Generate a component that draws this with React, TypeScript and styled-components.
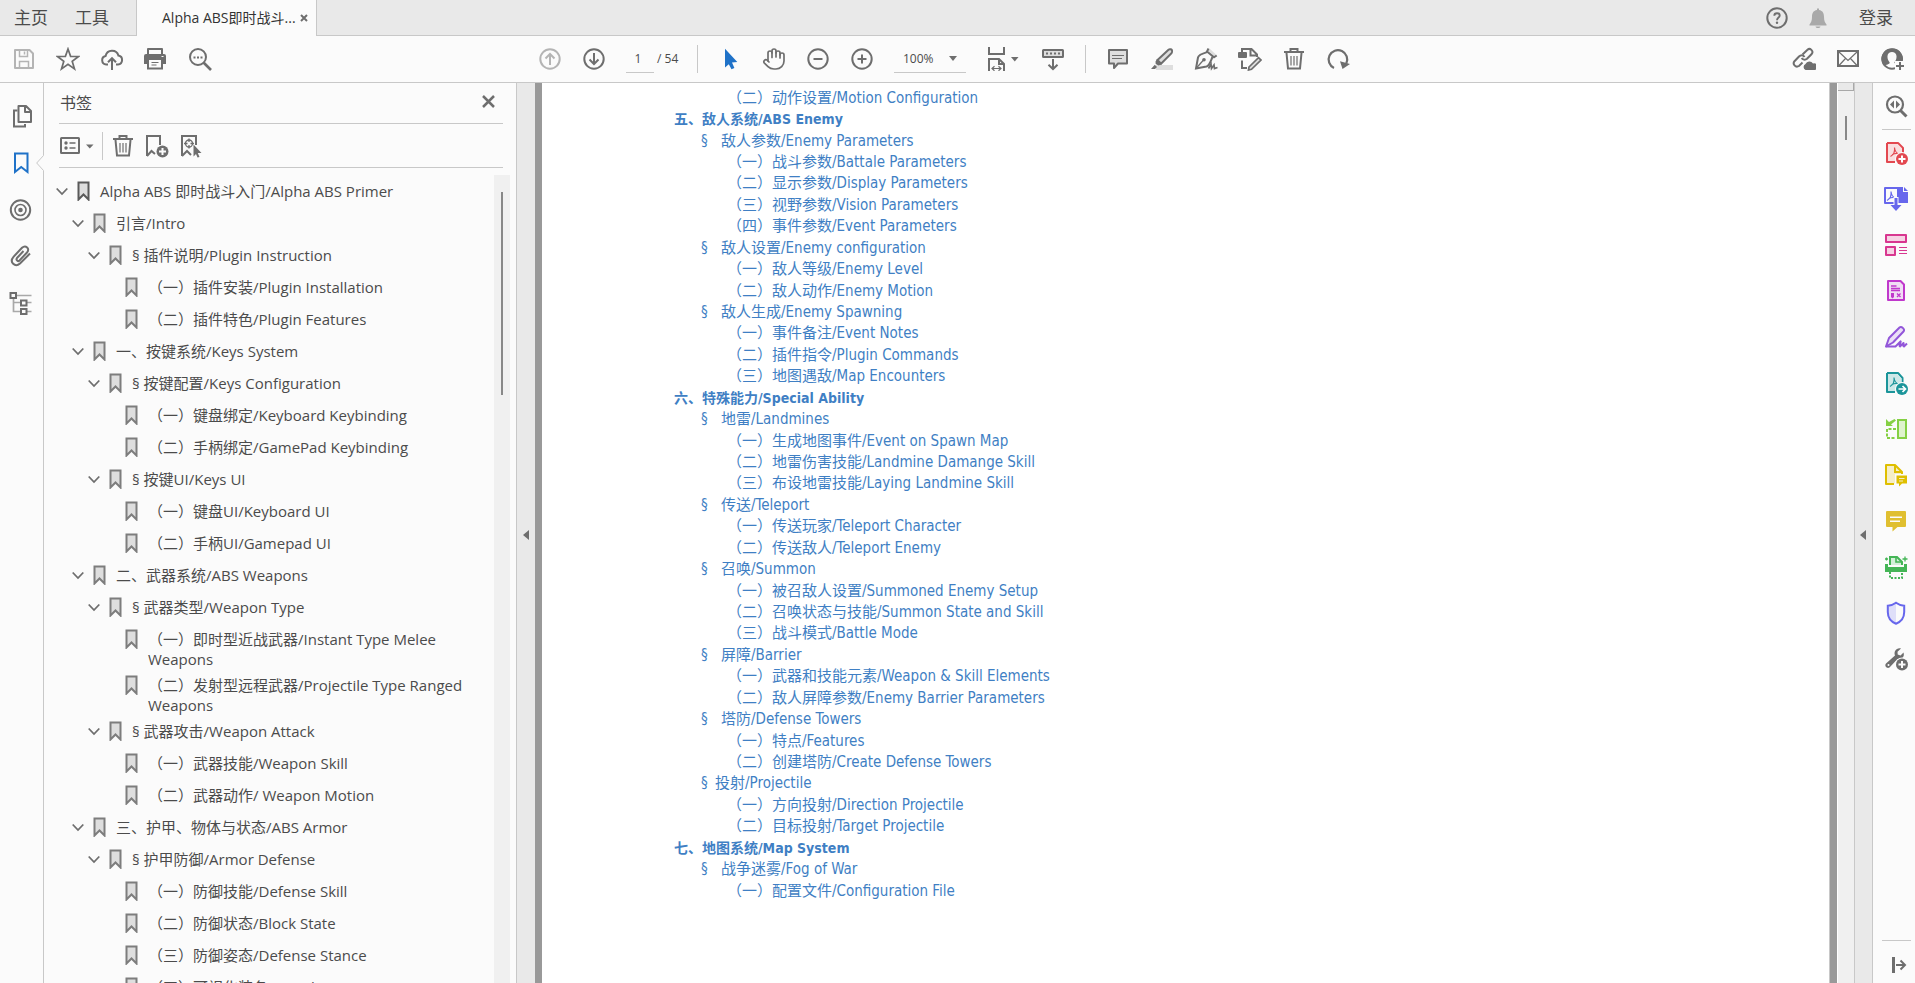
import React from 'react';
import styled, { createGlobalStyle } from 'styled-components';
import { Hand } from 'lucide-react';

const UI_FONT = '"Open Sans", "Noto Sans CJK SC", sans-serif';
const DOC_FONT = '"DejaVu Sans Condensed", "Noto Sans CJK SC", sans-serif';
const ICON = '#6e6e6e';
const LINE = '#c8c8c8';
const PALE = '#dedede';

const GlobalStyle = createGlobalStyle`
  *, *::before, *::after { box-sizing: border-box; }
  body { margin: 0; font-family: ${UI_FONT}; font-size: 15px; color: #4b4b4b; }
  button { border: 0; padding: 0; background: none; color: inherit; font: inherit; cursor: pointer; }
  ul { margin: 0; padding: 0; list-style: none; }
  svg { display: block; }
`;

const App_ = styled.div`
  display: flex;
  flex-direction: column;
  height: 100vh;
  overflow: hidden;
  background: #fbfbfb;
`;

/* ---------- top tab strip ---------- */
const TabStrip = styled.header`
  display: flex;
  height: 36px;
  flex: none;
  background: #e9e9e9;
`;
const StripLinks = styled.nav`
  display: flex;
  gap: 27px;
  width: 136px;
  padding-left: 14px;
  border-bottom: 1px solid ${LINE};
`;
const StripButton = styled.button`
  font-size: 17px;
  line-height: 34px;
  white-space: nowrap;
`;
const FileTab = styled.div`
  display: flex;
  align-items: center;
  gap: 5px;
  width: 181px;
  padding-left: 25px;
  border: solid ${LINE};
  border-width: 0 1px;
  background: #fbfbfb;
`;
const FileName = styled.button`
  width: 133px;
  font-size: 14px;
  line-height: 36px;
  color: #333;
  white-space: nowrap;
`;
const StripEnd = styled.div`
  display: flex;
  flex: 1;
  justify-content: flex-end;
  align-items: center;
  padding-right: 22px;
  border-bottom: 1px solid ${LINE};
`;
const StripIcons = styled.div`
  display: flex;
  gap: 17px;
  margin-right: 29px;
`;

/* ---------- toolbar ---------- */
const Toolbar = styled.div`
  display: grid;
  grid-template-columns: 1fr auto 1fr;
  align-items: center;
  height: 47px;
  flex: none;
  border-bottom: 1px solid ${LINE};
`;
const ToolGroup = styled.div<{ $end?: boolean; $middle?: boolean }>`
  display: flex;
  align-items: center;
  gap: 20px;
  justify-content: ${(p) => (p.$end ? 'flex-end' : 'flex-start')};
  padding: 0 ${(p) => (p.$middle ? 27 : p.$end ? 11 : 0)}px 0 ${(p) => (p.$middle || p.$end ? 0 : 12)}px;
`;
const IconButton = styled.button<{ $color?: string }>`
  display: flex;
  flex: none;
  color: ${(p) => p.$color ?? ICON};
`;
const Divider = styled.span`
  width: 1px;
  height: 28px;
  background: ${LINE};
`;
const PageField = styled.label`
  display: flex;
  gap: 3px;
  width: 51px;
  height: 28px;
  font-size: 12px;
  line-height: 28px;
  white-space: nowrap;
`;
const PageInput = styled.input`
  width: 28px;
  padding: 0 4px 0 0;
  border: 0;
  border-bottom: 1px solid ${LINE};
  background: none;
  color: inherit;
  font: inherit;
  text-align: center;
`;
const ZoomField = styled.label`
  display: flex;
  align-items: center;
  width: 72px;
  height: 28px;
  padding-right: 9px;
  border-bottom: 1px solid ${LINE};
  color: ${ICON};
`;
const ZoomSelect = styled.select`
  flex: 1;
  appearance: none;
  border: 0;
  padding: 0 0 0 9px;
  background: none;
  color: #4b4b4b;
  font: 12px/26px ${UI_FONT};
`;

/* ---------- body ---------- */
const Body = styled.div`
  display: flex;
  flex: 1;
  min-height: 0;
`;
const LeftRail = styled.nav`
  display: flex;
  flex-direction: column;
  align-items: flex-start;
  gap: 23px;
  width: 44px;
  flex: none;
  padding: 21px 0 0 8px;
  border-right: 1px solid ${LINE};
`;
const RailSlot = styled.div`
  position: relative;
`;
const Notch = styled.svg`
  position: absolute;
  left: 28px;
  top: 4px;
`;
const Panel = styled.aside`
  display: flex;
  flex-direction: column;
  width: 473px;
  flex: none;
  border-right: 1px solid ${LINE};
`;
const PanelHead = styled.div`
  display: flex;
  align-items: center;
  justify-content: space-between;
  height: 41px;
  flex: none;
  margin: 0 13px 0 15px;
  padding: 0 8px 3px 0;
  border-bottom: 1px solid ${LINE};
`;
const PanelTitle = styled.h2`
  margin: 0;
  padding-left: 1px;
  font-size: 16px;
  font-weight: 400;
`;
const PanelTools = styled.div`
  display: flex;
  align-items: center;
  gap: 8px;
  height: 44px;
  flex: none;
  margin: 0 13px 0 15px;
  border-bottom: 1px solid ${LINE};
`;
const PanelGroup = styled.div`
  display: flex;
  gap: 10px;
`;
const TreeArea = styled.div`
  display: flex;
  flex: 1;
  min-height: 0;
  padding-top: 7px;
`;
const Tree = styled.ul`
  flex: 1;
  overflow: hidden;
`;
const TreeRow = styled.li<{ $depth: number }>`
  display: flex;
  min-height: 32px;
  padding: 6px 16px 0 ${(p) => (p.$depth - 1) * 16 + 12}px;
`;
const Toggle = styled.button`
  width: 21px;
  height: 20px;
  flex: none;
  color: ${ICON};
`;
const MarkSlot = styled.span<{ $strong: boolean }>`
  width: 23px;
  flex: none;
  color: ${(p) => (p.$strong ? '#5a5a5a' : '#7d7d7d')};
`;
const TreeLink = styled.a`
  flex: 1;
  color: inherit;
  line-height: 20px;
  text-decoration: none;
`;
const TreeScroll = styled.div`
  width: 16px;
  margin-right: 6px;
  padding: 17px 0 0 7px;
  background: #f0f0f0;
`;
const Thumb = styled.div<{ $size: number }>`
  width: 2px;
  height: ${(p) => p.$size}px;
  background: #888;
`;
const Collapse = styled.button<{ $right?: boolean }>`
  display: flex;
  align-items: center;
  justify-content: center;
  width: 18px;
  flex: none;
  padding: 4px 1px 0 0;
  background: #e9e9e9;
  color: ${ICON};
  ${(p) => p.$right && `border: solid ${LINE}; border-width: 0 1px; width: 19px;`}
`;
const Desk = styled.main`
  flex: 1;
  min-width: 0;
  padding: 0 7px;
  background: #999;
`;
const Sheet = styled.article`
  height: 100%;
  overflow: hidden;
  padding: 4px 0 0 132px;
  border-right: 1px solid ${LINE};
  background: #fff;
`;
const Toc = styled.ul`
  display: grid;
  grid-auto-rows: 22px 21px 22px 21px 21px 22px 21px;
  align-items: center;
`;
const TocItem = styled.li<{ $level: number }>`
  padding-left: ${(p) => [0, 27, 53][p.$level - 1]}px;
  font-family: ${DOC_FONT};
  font-size: ${(p) => (p.$level === 1 ? 14 : 15)}px;
  line-height: 21px;
  font-weight: ${(p) => (p.$level === 1 ? 700 : 400)};
  white-space: nowrap;
`;
const TocLink = styled.a`
  color: #3f7fc4;
  text-decoration: none;
`;
const Section = styled.span<{ $tight: boolean }>`
  display: inline-block;
  width: ${(p) => (p.$tight ? 14 : 20)}px;
`;
const DocScroll = styled.div`
  display: flex;
  flex-direction: column;
  width: 17px;
  flex: none;
  border-left: 1px solid #fff;
  background: #f0f0f0;
`;
const ScrollCap = styled.div`
  height: 8px;
  margin-bottom: 25px;
  border: solid #a8a8a8;
  border-width: 0 1px 1px 0;
  background: #e9e9e9;
`;
const DocThumb = styled(Thumb)`
  margin-left: 7px;
`;
const RightRail = styled.nav`
  display: flex;
  flex-direction: column;
  width: 42px;
  flex: none;
  padding: 11px 4px 6px 9px;
`;
const RailGroup = styled.div`
  display: flex;
  flex: 1;
  flex-direction: column;
  gap: 22px;
  padding: 11px 0 0 2px;
`;
const RailRule = styled.span`
  height: 1px;
  flex: none;
  background: ${LINE};
`;
const RailTop = styled.div`
  padding: 0 0 11px 2px;
`;
const RailBottom = styled.div`
  padding: 12px 0 0 5px;
`;

/* ---------- icons ---------- */
type IconProps = { children: React.ReactNode; w?: number; h?: number; sw?: number };
const Icon = ({ children, w = 24, h = 24, sw = 2 }: IconProps) => (
  <svg width={w} height={h} viewBox={`0 0 ${w} ${h}`} fill="none" stroke="currentColor" strokeWidth={sw} aria-hidden="true">
    {children}
  </svg>
);
const solid = { fill: 'currentColor', stroke: 'none' };

const SaveIcon = () => (
  <Icon>
    <path d="M3 3H17.500L21 6.500V21H3Z" strokeLinejoin="round" />
    <path d="M7.500 3V9.500H15.500V3M7.500 21V14.500H16.500V21" strokeWidth="1.500" />
    <path d="M12.500 4.500V7.500" strokeWidth="1.500" />
  </Icon>
);
const StarIcon = () => (
  <Icon sw={1.7}>
    <path d="M12 2 14.600 9.300 22.500 9.500 16.200 14.300 18.500 21.900 12 17.400 5.500 21.900 7.800 14.300 1.500 9.500 9.400 9.300Z" />
  </Icon>
);
const CloudUpIcon = () => (
  <Icon>
    <path d="M8 17.500H6.200A4.300 4.300 0 0 1 5.600 9A6.600 6.600 0 0 1 18.400 8.600A4.500 4.500 0 0 1 18 17.500H16" />
    <path d="M12 23V11.500M8 15.300 12 11.200 16 15.300" />
  </Icon>
);
const PrintIcon = () => (
  <Icon>
    <path d="M4 7V2H18V7" strokeLinejoin="round" />
    <path d="M2 7H20A2 2 0 0 1 22 9V17H0V9A2 2 0 0 1 2 7Z" {...solid} />
    <rect x="4" y="12" width="14" height="9.500" fill="#fbfbfb" />
    <path d="M7.500 15.500H14.500M7.500 18H12.500" strokeWidth="1" />
    <rect x="17.500" y="9" width="2" height="1" fill="#fbfbfb" stroke="none" />
  </Icon>
);
const FindIcon = () => (
  <Icon>
    <circle cx="10" cy="10" r="8" />
    <path d="M15.500 15.500 23 23" strokeWidth="2.600" />
    <path d="M5.500 9.500h2v2h-2zM9 9.500h2v2h-2zM12.500 9.500h2v2h-2z" {...solid} />
  </Icon>
);
const Ring = ({ d }: { d: string }) => (
  <Icon>
    <circle cx="12" cy="12" r="9.700" />
    <path d={d} />
  </Icon>
);
const CursorIcon = () => (
  <Icon>
    <path d="M7 1.800V20.500L10.800 17.200 13.500 22.300 16.400 21 14 15.500 19.300 15Z" {...solid} />
  </Icon>
);
const FitIcon = () => (
  <Icon w={35}>
    <path d="M3 0V7H18V0M3 24V12H13L18 17V24M13 12V17H18" />
    <path d="M6.500 21.500H14.500M8.500 19.200 6 21.500 8.500 23.800M12.500 19.200 15 21.500 12.500 23.800" strokeWidth="1.200" />
    <path d="M25 10H32.500L28.800 14.500Z" {...solid} />
  </Icon>
);
const RulerDownIcon = () => (
  <Icon>
    <rect x="2" y="3" width="20" height="7" rx="0.500" fill={PALE} />
    <path d="M5 6.500H19" strokeDasharray="2 2" />
    <path d="M12 12V22M7.500 17.700 12 22 16.500 17.700" />
  </Icon>
);
const CommentIcon = () => (
  <Icon>
    <path d="M3 3H21V16.500H12L8 21V16.500H3Z" fill={PALE} strokeLinejoin="round" />
    <path d="M6 8.500H18M6 11.500H16" strokeWidth="1" />
  </Icon>
);
const HighlightIcon = () => (
  <Icon>
    <rect x="6" y="18" width="17" height="5" fill={PALE} stroke="none" />
    <path d="M7.500 13 18.500 2.700C19.500 1.800 22.500 1.800 22 5L21.500 6.300 11 16.700Z" fill={PALE} strokeWidth="2" />
    <path d="M7 12.200 5.500 14.500 5.700 17 8.500 18.500 10.800 17.700 12 16.500ZM4.800 17.800 1 22H5L7 20Z" {...solid} />
  </Icon>
);
const PenIcon = () => (
  <Icon>
    <path d="M13.500 3 15.500 1.500 22.500 8 20.500 9.500Z" fill={PALE} stroke="none" />
    <path d="M14.500 1.500 13 4.500 20 10.300 22.700 8.500" strokeWidth="2" />
    <path d="M13.500 5C9 6.300 4.500 7.500 4 10.500L2 21.500 12.500 19.500C15.500 18.500 16.500 14.500 18.500 10" strokeWidth="2" />
    <path d="M2 21.500 9.500 13" strokeWidth="1.200" />
    <circle cx="10" cy="12.700" r="1.800" {...solid} />
    <path d="M14.500 21.500 17 17 17.500 21.500 20 18 20.500 21.500 23.500 20.500" strokeWidth="1.700" />
  </Icon>
);
const EditIcon = () => (
  <Icon>
    <rect x="0" y="5" width="9" height="6" rx="1" {...solid} />
    <path d="M4 5V2H13.500L19 7.500V10M12.500 2V8.500H19M4 13.500V21H9" strokeWidth="2" />
    <path d="M11 20 20.500 10.700 23 13 13.500 22.300 10.500 23Z" fill={PALE} strokeWidth="1.700" />
  </Icon>
);
const TrashIcon = () => (
  <Icon>
    <path d="M2 5H22M8.500 4.500V2H15.500V4.500M4.500 6 6 21.500H18L19.500 6" />
    <path d="M9 9V18.500M12 9V18.500M15 9V18.500" strokeWidth="1.200" />
  </Icon>
);
const RotateIcon = () => (
  <Icon>
    <path d="M8 20.900A9.300 9.300 0 1 1 20.300 16.500" strokeWidth="2.200" />
    <path d="M14 14.300 24 17 16.500 22Z" {...solid} />
  </Icon>
);
const LinkCloudIcon = () => (
  <Icon>
    <path d="M10.500 7.500 15.500 2.700C18 .5 22 4 19.700 7L15 11.800C13 13.500 10.500 12.500 9.700 11" />
    <path d="M12.500 10C11 7.500 8.500 8 7 9.500L2.500 14.200C.2 17 3.500 21 7 19L10.500 15.500" />
    <path d="M13.500 23A3.300 3.300 0 0 1 13.500 17A4.300 4.300 0 0 1 21 16.500A3.300 3.300 0 0 1 23 23Z" {...solid} />
  </Icon>
);
const MailIcon = () => (
  <Icon>
    <rect x="2" y="4" width="20" height="15" />
    <path d="M3 5 12 13.500 21 5M3 18.500 9.500 11.500M21 18.500 14.500 11.500" strokeWidth="1.200" />
  </Icon>
);
const AccountIcon = () => (
  <Icon>
    <circle cx="12" cy="12" r="9.700" />
    <path d="M12 1.500A10.300 10.300 0 0 0 4.500 19C6 17.500 9.800 17.500 9.700 15.500C8 13.500 7.300 11.500 7.500 9C7.700 3.500 16.300 3.500 16.500 9C16.700 11.500 16 13.500 14.300 15.500L15 16.500H22A10.500 10.500 0 0 0 12 1.500Z" {...solid} />
    <path d="M15 14H24V24H15Z" fill="#fbfbfb" stroke="none" />
    <path d="M20 15V23M16 19H24" />
  </Icon>
);
const HelpIcon = () => (
  <Icon>
    <circle cx="12" cy="12" r="9.700" />
    <path d="M9.300 9.700C9.300 6.300 14.700 6.500 14.700 9.500C14.700 11.700 12 11.500 12 14.300" strokeWidth="1.900" />
    <circle cx="12" cy="16.800" r="1.200" {...solid} />
  </Icon>
);
const BellIcon = () => (
  <Icon>
    <path d="M11 2.500H13V4C17 4.700 18 7.500 18 11C18 15 19 16.500 20.500 18.500V19.500H3.500V18.500C5 16.500 6 15 6 11C6 7.500 7 4.700 11 4ZM9.500 20.500H14.500C14 22.500 10 22.500 9.500 20.500Z" {...solid} />
  </Icon>
);
const PagesIcon = () => (
  <Icon>
    <path d="M9.500 6.500H6V22.500H17V20" />
    <path d="M10.500 2H18L23 7V18H10.500ZM17 2V8H23" strokeLinejoin="round" />
  </Icon>
);
const RibbonIcon = () => (
  <Icon>
    <path d="M7 2.500H19.500V21L13.200 16 7 21Z" />
  </Icon>
);
const TargetIcon = () => (
  <Icon>
    <circle cx="12.500" cy="12" r="9.700" />
    <circle cx="12.500" cy="12" r="5.500" strokeWidth="1.600" />
    <circle cx="12.500" cy="12" r="2.300" {...solid} />
  </Icon>
);
const ClipIcon = () => (
  <Icon>
    <path d="M15.500 6 9 13C7.500 15 10 17 11.500 15.500L19 7.500C22.500 3.500 17.500 -.5 14 2.800L5.500 11.800C1 17 7 23 12 18.500L22 8.500" />
  </Icon>
);
const TreeIcon = () => (
  <Icon>
    <path d="M8 3.500H23.500M5.500 7V19.500H11M5.500 10.500H23.500M11 19.500H23.500" stroke="#a9a9a9" strokeWidth="1.700" />
    <path d="M2.500 1H8V6H2.500ZM13 8.500H18.500V13.500H13ZM13 17H18.500V22H13Z" fill="#fbfbfb" />
  </Icon>
);
const CloseIcon = ({ size, sw }: { size: number; sw: number }) => (
  <Icon w={size} h={size} sw={sw}>
    <path d={`M1 1 ${size - 1} ${size - 1}M${size - 1} 1 1 ${size - 1}`} />
  </Icon>
);
const OptionsIcon = () => (
  <Icon w={35}>
    <rect x="2" y="4" width="18" height="15" rx="0.500" />
    <circle cx="7" cy="9" r="1.700" {...solid} />
    <circle cx="7" cy="14" r="1.700" {...solid} />
    <path d="M10.500 9H16.500M10.500 14H16.500" strokeWidth="1.700" />
    <path d="M27 10.500H34.500L30.800 14.500Z" {...solid} />
  </Icon>
);
const AddMarkIcon = () => (
  <Icon>
    <path d="M2 22V2H15V11M2 22 6.500 17 10 20" />
    <circle cx="17.500" cy="17.500" r="6" {...solid} />
    <path d="M14 17.500H21M17.500 14V21" stroke="#fbfbfb" />
  </Icon>
);
const GoMarkIcon = () => (
  <Icon>
    <path d="M3 22V2H17V11M3 22 8 17 12 21" />
    <circle cx="10" cy="9.500" r="3.500" strokeWidth="1.300" />
    <path d="M10 4.500V8M10 11V14.500M5 9.500H8.500M11.500 9.500H15" strokeWidth="1.300" />
    <path d="M14.500 10.500 22.500 19H18.800L20.500 23 18.500 23.500 17 20 14.500 22.500Z" {...solid} />
  </Icon>
);
const BookmarkIcon = () => (
  <Icon w={13} h={20}>
    <path d="M1.500 1.500H11.500V18.500L6.500 13.500 1.500 18.500Z" fill={PALE} />
  </Icon>
);
const Chevron = () => (
  <Icon w={12} h={20} sw={1.8}>
    <path d="M.7 7.500 6 13 11.300 7.500" />
  </Icon>
);
const CollapseArrow = () => (
  <Icon w={6} h={12}>
    <path d="M6 1V11L0 6Z" {...solid} />
  </Icon>
);

const Acrobat = ({ x, y }: { x: number; y: number }) => (
  <path
    transform={`translate(${x} ${y})`}
    d="M0 9.500C3 8 4.500 4.500 4 .5M4 .5C4.500 5 6 6.500 9 7M1.500 7.800C4 6.300 6.500 6 9 6.800"
    strokeWidth="1.100"
  />
);
const RailFind = () => (
  <Icon>
    <circle cx="11" cy="10.500" r="8" strokeWidth="2.200" />
    <path d="M16.500 16.500 22.500 22.500" strokeWidth="3" />
    <path d="M10 6.500V14.500L6 10.500ZM12 6.500V14.500L16 10.500Z" {...solid} />
  </Icon>
);
const CreatePdf = () => (
  <Icon>
    <path d="M3 2H14L19 7V12M11 21H3V2" fill="#f9dfe0" strokeLinejoin="round" />
    <path d="M4 3H13.500L18 7.500V12L12 20H4Z" fill="#f9dfe0" stroke="none" />
    <Acrobat x={6.5} y={6} />
    <circle cx="18" cy="18" r="7" fill="#fbfbfb" stroke="none" />
    <circle cx="18" cy="18" r="6" {...solid} />
    <path d="M14.500 18H21.500M18 14.500V21.500" stroke="#fff" />
  </Icon>
);
const ExportPdf = () => (
  <Icon>
    <path d="M10 16H1V1H13" strokeLinejoin="round" />
    <path d="M13 0H19V5H24V16H13ZM20 0 24 4H20Z" {...solid} />
    <Acrobat x={3} y={4} />
    <path d="M12 10V18" stroke="#fbfbfb" strokeWidth="5" />
    <path d="M10.500 11H13.500V18H17.500L12 24 6.500 18H10.500Z" {...solid} />
  </Icon>
);
const Organize = () => (
  <Icon>
    <path d="M2 2H22V9H2ZM2 14H11V22H2Z" fill="#f6d3e4" strokeLinejoin="round" />
    <path d="M15 14.500H23M15 17.500H23M15 20.500H23" strokeWidth="1.200" />
  </Icon>
);
const FormIcon = () => (
  <Icon>
    <path d="M4 2H16.500L20 5.500V21H4Z" fill="#f0ddf4" strokeLinejoin="round" />
    <path d="M7 7H12.500M7 9.500H16M7 11.500H16M13 14.500 16.500 18M16.500 14.500 13 18" strokeWidth="1.300" />
    <path d="M7 14H10V18L8.500 19.500 7 18Z" {...solid} />
  </Icon>
);
const SignIcon = () => (
  <Icon>
    <path d="M2 21.500 5 13 15.500 2.500C17.500.8 21.500 4.500 19.500 6.500L9 17.500Z" fill="#ebdff7" strokeLinejoin="round" />
    <path d="M2 21.500H11.500L16.500 16.500C17.500 15.500 14.500 21.500 16 21.500L19.500 18C20 18 18.500 21.500 20 21.500L23 18.500" />
  </Icon>
);
const SharePdf = () => (
  <Icon>
    <path d="M3 2H14L18.500 7V12M11 21H3V2" strokeLinejoin="round" />
    <path d="M4 3H13.500L17.500 7.500V12L12 20H4Z" fill="#cde8e8" stroke="none" />
    <Acrobat x={6} y={6} />
    <circle cx="18" cy="18" r="7" fill="#fbfbfb" stroke="none" />
    <circle cx="18" cy="18" r="6" {...solid} />
    <path d="M14.500 18H21M18.500 15 21.500 18 18.500 21" stroke="#fff" strokeWidth="1.700" />
  </Icon>
);
const Compare = () => (
  <Icon>
    <rect x="14" y="3" width="8" height="18" fill="#dff3cd" />
    <path d="M12 12H3V21H12" strokeDasharray="3 1.500" />
    <path d="M2 2V9H9L7 7.500 12 3.500 10.500 2 5 5Z" {...solid} />
  </Icon>
);
const PageNote = () => (
  <Icon>
    <path d="M10 21H2V2H11L18 9V11" fill="#f5eec7" strokeLinejoin="round" />
    <path d="M11 2V9H18" />
    <path d="M11 11H24V22H17L15 24V22H11Z" fill="#fbfbfb" stroke="none" />
    <path d="M12.500 12.500H23V20.500H18L15 23.500V20.500H12.500Z" {...solid} />
    <path d="M15 15.500H20.500M15 18H19" stroke="#f5eec7" strokeWidth="1.200" />
  </Icon>
);
const NoteIcon = () => (
  <Icon>
    <path d="M3 2H21A1 1 0 0 1 22 3V17A1 1 0 0 1 21 18H13.500L8.500 22.500V18H3A1 1 0 0 1 2 17V3A1 1 0 0 1 3 2Z" {...solid} />
    <path d="M6 8.200H18M6 12.200H16" stroke="#fbfbfb" strokeWidth="1.600" />
  </Icon>
);
const ScanIcon = () => (
  <Icon>
    <path d="M6 10V2H13L18 7V10" fill="#d3efd8" />
    <path d="M12 2V7H18" strokeWidth="1.600" />
    <path d="M1 9H4V12H20V9H23V17H1Z" {...solid} />
    <path d="M6 17V23H18V17" strokeDasharray="2 1.500" />
    <path d="M2.500 2.500V5.500M1 4H4M21 1.500V6.500M18.500 4H23.500" strokeWidth="1.300" />
  </Icon>
);
const ShieldIcon = () => (
  <Icon>
    <path d="M12 2C9 4 6.500 4.700 3.500 4.700V11C3.500 16.500 7 20.500 12 22.500Z" fill="#dfdff9" stroke="none" />
    <path d="M12 1.800C9 4 6.500 4.700 3.800 4.700V11C3.800 16.500 7 20.700 12 22.700C17 20.700 20.200 16.500 20.200 11V4.700C17.500 4.700 15 4 12 1.800Z" />
  </Icon>
);
const ToolsIcon = () => (
  <Icon>
    <path d="M17 1.500C12 .5 9.500 5 11 8.500L2 16.500C0 19 3 22 5.500 20.500L13.500 12C17.500 13 21 10 19.500 5.500L16.500 8.500 13.700 7.500 13.500 4.700Z" {...solid} />
    <circle cx="4.500" cy="18" r="1" fill="#fbfbfb" stroke="none" />
    <circle cx="18" cy="17.500" r="7" fill="#fbfbfb" stroke="none" />
    <circle cx="18" cy="17.500" r="6" {...solid} />
    <path d="M14.500 17.500H21.500M18 14V21" stroke="#fbfbfb" />
  </Icon>
);
const OpenRailIcon = () => (
  <Icon>
    <path d="M6.500 4V20" strokeWidth="3" />
    <path d="M9 12H18M13.500 7.500 18 12 13.500 16.500" strokeWidth="2" />
  </Icon>
);

/* ---------- data ---------- */
const bookmarks: [number, string][] = [
  [1, 'Alpha ABS 即时战斗入门/Alpha ABS Primer'],
  [2, '引言/Intro'],
  [3, '§ 插件说明/Plugin Instruction'],
  [4, '（一）插件安装/Plugin Installation'],
  [4, '（二）插件特色/Plugin Features'],
  [2, '一、按键系统/Keys System'],
  [3, '§ 按键配置/Keys Configuration'],
  [4, '（一）键盘绑定/Keyboard Keybinding'],
  [4, '（二）手柄绑定/GamePad Keybinding'],
  [3, '§ 按键UI/Keys UI'],
  [4, '（一）键盘UI/Keyboard UI'],
  [4, '（二）手柄UI/Gamepad UI'],
  [2, '二、武器系统/ABS Weapons'],
  [3, '§ 武器类型/Weapon Type'],
  [4, '（一）即时型近战武器/Instant Type Melee Weapons'],
  [4, '（二）发射型远程武器/Projectile Type Ranged Weapons'],
  [3, '§ 武器攻击/Weapon Attack'],
  [4, '（一）武器技能/Weapon Skill'],
  [4, '（二）武器动作/ Weapon Motion'],
  [2, '三、护甲、物体与状态/ABS Armor'],
  [3, '§ 护甲防御/Armor Defense'],
  [4, '（一）防御技能/Defense Skill'],
  [4, '（二）防御状态/Block State'],
  [4, '（三）防御姿态/Defense Stance'],
  [4, '（四）可视化装备/Visual Equipment'],
];

const contents: [number, string][] = [
  [3, '（二）动作设置/Motion Configuration'],
  [1, '五、敌人系统/ABS Enemy'],
  [2, '敌人参数/Enemy Parameters'],
  [3, '（一）战斗参数/Battale Parameters'],
  [3, '（二）显示参数/Display Parameters'],
  [3, '（三）视野参数/Vision Parameters'],
  [3, '（四）事件参数/Event Parameters'],
  [2, '敌人设置/Enemy configuration'],
  [3, '（一）敌人等级/Enemy Level'],
  [3, '（二）敌人动作/Enemy Motion'],
  [2, '敌人生成/Enemy Spawning'],
  [3, '（一）事件备注/Event Notes'],
  [3, '（二）插件指令/Plugin Commands'],
  [3, '（三）地图遇敌/Map Encounters'],
  [1, '六、特殊能力/Special Ability'],
  [2, '地雷/Landmines'],
  [3, '（一）生成地图事件/Event on Spawn Map'],
  [3, '（二）地雷伤害技能/Landmine Damange Skill'],
  [3, '（三）布设地雷技能/Laying Landmine Skill'],
  [2, '传送/Teleport'],
  [3, '（一）传送玩家/Teleport Character'],
  [3, '（二）传送敌人/Teleport Enemy'],
  [2, '召唤/Summon'],
  [3, '（一）被召敌人设置/Summoned Enemy Setup'],
  [3, '（二）召唤状态与技能/Summon State and Skill'],
  [3, '（三）战斗模式/Battle Mode'],
  [2, '屏障/Barrier'],
  [3, '（一）武器和技能元素/Weapon & Skill Elements'],
  [3, '（二）敌人屏障参数/Enemy Barrier Parameters'],
  [2, '塔防/Defense Towers'],
  [3, '（一）特点/Features'],
  [3, '（二）创建塔防/Create Defense Towers'],
  [2, '投射/Projectile'],
  [3, '（一）方向投射/Direction Projectile'],
  [3, '（二）目标投射/Target Projectile'],
  [1, '七、地图系统/Map System'],
  [2, '战争迷雾/Fog of War'],
  [3, '（一）配置文件/Configuration File'],
];

const railTools: [string, string, () => React.JSX.Element][] = [
  ['创建 PDF', '#e34850', CreatePdf],
  ['导出 PDF', '#6767ec', ExportPdf],
  ['组织页面', '#d83790', Organize],
  ['准备表单', '#c038cc', FormIcon],
  ['填写和签名', '#9256d9', SignIcon],
  ['发送 PDF', '#1b959a', SharePdf],
  ['比较文件', '#85d044', Compare],
  ['编辑 PDF', '#dfbf00', PageNote],
  ['注释', '#e0bf30', NoteIcon],
  ['扫描和 OCR', '#44b556', ScanIcon],
  ['保护', '#6767ec', ShieldIcon],
  ['更多工具', ICON, ToolsIcon],
];

export default function App() {
  return (
    <App_>
      <GlobalStyle />
      <TabStrip>
        <StripLinks>
          <StripButton>主页</StripButton>
          <StripButton>工具</StripButton>
        </StripLinks>
        <FileTab>
          <FileName>Alpha ABS即时战斗...</FileName>
          <IconButton aria-label="关闭文件"><CloseIcon size={8} sw={2} /></IconButton>
        </FileTab>
        <StripEnd>
          <StripIcons>
            <IconButton aria-label="帮助"><HelpIcon /></IconButton>
            <IconButton aria-label="通知" $color="#a9a9a9"><BellIcon /></IconButton>
          </StripIcons>
          <StripButton>登录</StripButton>
        </StripEnd>
      </TabStrip>

      <Toolbar>
        <ToolGroup>
          <IconButton aria-label="保存" $color="#b4b4b4"><SaveIcon /></IconButton>
          <IconButton aria-label="收藏"><StarIcon /></IconButton>
          <IconButton aria-label="上传"><CloudUpIcon /></IconButton>
          <IconButton aria-label="打印"><PrintIcon /></IconButton>
          <IconButton aria-label="查找"><FindIcon /></IconButton>
        </ToolGroup>
        <ToolGroup $middle>
          <IconButton aria-label="上一页" $color="#b4b4b4"><Ring d="M12 18V7M7.500 11.500 12 7 16.500 11.500" /></IconButton>
          <IconButton aria-label="下一页"><Ring d="M12 6V17M7.500 12.500 12 17 16.500 12.500" /></IconButton>
          <PageField>
            <PageInput aria-label="页码" defaultValue="1" />/ 54
          </PageField>
          <Divider />
          <IconButton aria-label="选择" $color="#1f72c8"><CursorIcon /></IconButton>
          <IconButton aria-label="抓手"><Hand size={24} strokeWidth={1.7} /></IconButton>
          <IconButton aria-label="缩小"><Ring d="M7.500 12H16.500" /></IconButton>
          <IconButton aria-label="放大"><Ring d="M7.500 12H16.500M12 7.500V16.500" /></IconButton>
          <ZoomField>
            <ZoomSelect aria-label="缩放"><option>100%</option></ZoomSelect>
            <Icon w={8} h={5}><path d="M0 0H8L4 5Z" {...solid} /></Icon>
          </ZoomField>
          <IconButton aria-label="适合宽度"><FitIcon /></IconButton>
          <IconButton aria-label="阅读模式"><RulerDownIcon /></IconButton>
          <Divider />
          <IconButton aria-label="添加注释"><CommentIcon /></IconButton>
          <IconButton aria-label="高亮"><HighlightIcon /></IconButton>
          <IconButton aria-label="签名"><PenIcon /></IconButton>
          <IconButton aria-label="编辑"><EditIcon /></IconButton>
          <IconButton aria-label="删除"><TrashIcon /></IconButton>
          <IconButton aria-label="旋转"><RotateIcon /></IconButton>
        </ToolGroup>
        <ToolGroup $end>
          <IconButton aria-label="共享链接"><LinkCloudIcon /></IconButton>
          <IconButton aria-label="邮件"><MailIcon /></IconButton>
          <IconButton aria-label="邀请"><AccountIcon /></IconButton>
        </ToolGroup>
      </Toolbar>

      <Body>
        <LeftRail>
          <IconButton aria-label="页面缩略图"><PagesIcon /></IconButton>
          <RailSlot>
            <IconButton aria-label="书签" $color="#1f72c8"><RibbonIcon /></IconButton>
            <Notch width="8" height="16" viewBox="0 0 8 16">
              <path d="M8 0 .700 8 8 16Z" fill="#fbfbfb" />
              <path d="M7.500 .500 .700 8 7.500 15.500" fill="none" stroke={LINE} />
            </Notch>
          </RailSlot>
          <IconButton aria-label="目标"><TargetIcon /></IconButton>
          <IconButton aria-label="附件"><ClipIcon /></IconButton>
          <IconButton aria-label="标签"><TreeIcon /></IconButton>
        </LeftRail>

        <Panel>
          <PanelHead>
            <PanelTitle>书签</PanelTitle>
            <IconButton aria-label="关闭面板"><CloseIcon size={13} sw={2.5} /></IconButton>
          </PanelHead>
          <PanelTools>
            <IconButton aria-label="选项"><OptionsIcon /></IconButton>
            <Divider />
            <PanelGroup>
              <IconButton aria-label="删除书签"><TrashIcon /></IconButton>
              <IconButton aria-label="新建书签"><AddMarkIcon /></IconButton>
              <IconButton aria-label="查找当前书签"><GoMarkIcon /></IconButton>
            </PanelGroup>
          </PanelTools>
          <TreeArea>
            <Tree>
              {bookmarks.map(([depth, title], i) => (
                <TreeRow key={i} $depth={depth}>
                  {depth < 4 ? <Toggle aria-label="折叠"><Chevron /></Toggle> : <Toggle as="span" />}
                  <MarkSlot $strong={depth === 1}><BookmarkIcon /></MarkSlot>
                  <TreeLink href="#">{title}</TreeLink>
                </TreeRow>
              ))}
            </Tree>
            <TreeScroll><Thumb $size={203} /></TreeScroll>
          </TreeArea>
        </Panel>

        <Collapse aria-label="收起导览窗格"><CollapseArrow /></Collapse>
        <Desk>
          <Sheet>
            <Toc>
              {contents.map(([level, title], i) => (
                <TocItem key={i} $level={level}>
                  <TocLink href="#">
                    {level === 2 && <Section $tight={title.startsWith('投射')}>§</Section>}
                    {title}
                  </TocLink>
                </TocItem>
              ))}
            </Toc>
          </Sheet>
        </Desk>
        <DocScroll>
          <ScrollCap />
          <DocThumb $size={24} />
        </DocScroll>
        <Collapse $right aria-label="展开工具窗格"><CollapseArrow /></Collapse>
        <RightRail>
          <RailTop>
            <IconButton aria-label="搜索工具"><RailFind /></IconButton>
          </RailTop>
          <RailRule />
          <RailGroup>
            {railTools.map(([name, color, Glyph]) => (
              <IconButton key={name} aria-label={name} $color={color}><Glyph /></IconButton>
            ))}
          </RailGroup>
          <RailRule />
          <RailBottom>
            <IconButton aria-label="打开窗格"><OpenRailIcon /></IconButton>
          </RailBottom>
        </RightRail>
      </Body>
    </App_>
  );
}
